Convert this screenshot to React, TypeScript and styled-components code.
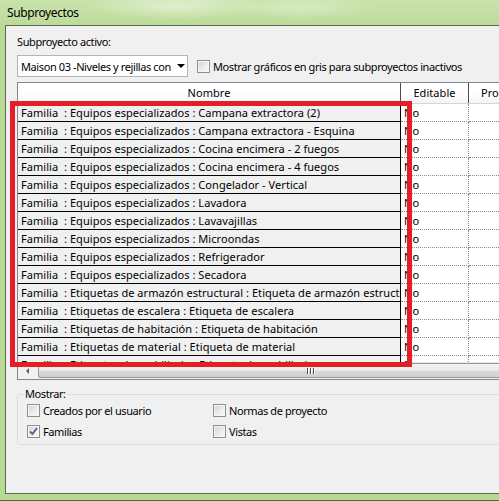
import React from 'react'
import styled, { createGlobalStyle } from 'styled-components'

const GlobalStyle = createGlobalStyle`
  html, body {
    margin: 0;
    padding: 0;
    background: #f0f0f0;
  }
  body {
    font-family: "Noto Sans", "Open Sans", sans-serif;
    font-size: 11px;
    letter-spacing: -0.4px;
    color: #000;
  }
`

const Window = styled.div`
  width: 499px;
  height: 501px;
  overflow: hidden;
  box-sizing: border-box;
  display: flex;
  flex-direction: column;
  background: #b8d993;
  border-bottom: 1px solid #56673f;
`

const TitleBar = styled.div`
  height: 25px;
  flex: none;
  display: flex;
  align-items: center;
  padding-left: 7px;
  font-size: 12px;
  background:
    radial-gradient(ellipse 90px 14px at 175px 6px, rgba(255, 255, 255, 0.45), transparent),
    radial-gradient(ellipse 80px 12px at 300px 8px, rgba(255, 255, 255, 0.3), transparent),
    linear-gradient(180deg, #c9e3ab 0%, #bddb9b 100%);
`

const Client = styled.div`
  flex: 1;
  min-height: 0;
  margin-left: 5px;
  margin-bottom: 6px;
  border: 1px solid #5a6a4c;
  border-right: none;
  background: #f0f0f0;
  padding: 9px 0 0 11px;
  display: flex;
  flex-direction: column;
`

const Label = styled.div`
  line-height: 14px;
`

const TopRow = styled.div`
  margin-top: 6px;
  display: flex;
  align-items: center;
  gap: 9px;
`

const Combo = styled.div`
  width: 171px;
  height: 22px;
  box-sizing: border-box;
  border: 1px solid #b4b4b4;
  background: #fff;
  display: flex;
  align-items: center;
  padding-left: 3px;
  padding-right: 2px;
  white-space: nowrap;
  overflow: hidden;
`

const ComboText = styled.span`
  flex: 1;
  overflow: hidden;
`

const ComboArrow = styled.span`
  width: 0;
  height: 0;
  border-left: 4px solid transparent;
  border-right: 4px solid transparent;
  border-top: 4px solid #000;
  margin-left: 4px;
`

const CheckLabel = styled.label`
  display: flex;
  align-items: center;
  gap: 3px;
  white-space: nowrap;
  line-height: 17px;
`

const Box = styled.span`
  width: 13px;
  height: 13px;
  flex: none;
  box-sizing: border-box;
  border: 1px solid #8e8f8f;
  background: linear-gradient(135deg, #d2d4d8 0%, #f5f5f5 80%);
  box-shadow: inset 0 0 0 1px #f6f6f6;
  display: flex;
  align-items: center;
  justify-content: center;
`

const Grid = styled.div`
  margin-top: 5px;
  width: 600px;
  flex: none;
  position: relative;
  border: 1px solid #828790;
  border-right: none;
  background: #fff;
  letter-spacing: 0.05px;
`

const Viewport = styled.div`
  height: 279px;
  overflow: hidden;
`

const HeaderRow = styled.div`
  display: flex;
  height: 21px;
  box-sizing: border-box;
  border-bottom: 1px solid #d5d5d5;
  background: linear-gradient(180deg, #ffffff 0%, #ffffff 50%, #f3f4f6 100%);
`

const HeaderCell = styled.div<{ $w: number; $inset?: number }>`
  width: ${p => p.$w}px;
  flex: none;
  box-sizing: border-box;
  border-right: 1px solid #4d4d4d;
  display: flex;
  align-items: center;
  justify-content: ${p => (p.$inset === undefined ? 'center' : 'flex-start')};
  padding-left: ${p => p.$inset ?? 0}px;
  line-height: 20px;
  white-space: nowrap;
  overflow: hidden;
`

const Row = styled.div`
  display: flex;
  height: 18px;
`

const NameCell = styled.div`
  width: 383px;
  flex: none;
  box-sizing: border-box;
  border-right: 1px solid #000;
  border-bottom: 1px solid #000;
  background: #f0f0f0;
  padding-left: 3px;
  line-height: 17px;
  white-space: pre;
  overflow: hidden;
`

const ValueCell = styled.div<{ $w: number }>`
  width: ${p => p.$w}px;
  flex: none;
  box-sizing: border-box;
  border-right: 1px dotted #8a8a8a;
  border-bottom: 1px dotted #8a8a8a;
  padding-left: 3px;
  line-height: 17px;
`

const HScroll = styled.div`
  height: 17px;
  display: flex;
  align-items: center;
  background: linear-gradient(180deg, #e4e4e4 0%, #f1f1f1 40%, #f1f1f1 100%);
`

const ScrollArrow = styled.div`
  width: 19px;
  height: 17px;
  flex: none;
  display: flex;
  align-items: center;
  justify-content: center;
`

const ArrowGlyph = styled.span`
  width: 0;
  height: 0;
  border-top: 3px solid transparent;
  border-bottom: 3px solid transparent;
  border-right: 3px solid #606060;
`

const Thumb = styled.div`
  width: 546px;
  height: 15px;
  margin-left: 1px;
  flex: none;
  box-sizing: border-box;
  border: 1px solid #989898;
  border-radius: 2px;
  background: linear-gradient(180deg, #f3f3f3 0%, #e9e9e9 50%, #d9d9d9 51%, #d0d0d0 100%);
  display: flex;
  align-items: center;
  justify-content: center;
  gap: 1px;
`

const Grip = styled.span`
  width: 1px;
  height: 6px;
  background: #4f4f4f;
  box-shadow: 1px 0 0 #fff;
  margin-right: 1px;
`

const Highlight = styled.div`
  position: absolute;
  left: -8px;
  top: 18px;
  width: 402px;
  height: 266px;
  box-sizing: border-box;
  border: 5px solid #e41d27;
  pointer-events: none;
`

const Group = styled.fieldset`
  margin: 7px 0 0 0;
  width: 600px;
  box-sizing: border-box;
  border: 1px solid #d5dfe5;
  border-radius: 3px;
  padding: 1px 0 4px 9px;
`

const Legend = styled.legend`
  padding: 0 1px;
  margin-left: -3px;
  line-height: 14px;
`

const Options = styled.div`
  display: grid;
  grid-template-columns: 186px 200px;
  row-gap: 4px;
`

const rows = [
  'Familia  : Equipos especializados : Campana extractora (2)',
  'Familia  : Equipos especializados : Campana extractora - Esquina',
  'Familia  : Equipos especializados : Cocina encimera - 2 fuegos',
  'Familia  : Equipos especializados : Cocina encimera - 4 fuegos',
  'Familia  : Equipos especializados : Congelador - Vertical',
  'Familia  : Equipos especializados : Lavadora',
  'Familia  : Equipos especializados : Lavavajillas',
  'Familia  : Equipos especializados : Microondas',
  'Familia  : Equipos especializados : Refrigerador',
  'Familia  : Equipos especializados : Secadora',
  'Familia  : Etiquetas de armazón estructural : Etiqueta de armazón estructural',
  'Familia  : Etiquetas de escalera : Etiqueta de escalera',
  'Familia  : Etiquetas de habitación : Etiqueta de habitación',
  'Familia  : Etiquetas de material : Etiqueta de material',
  'Familia  : Etiquetas de mobiliario : Etiqueta de mobiliario',
]

const Checkbox: React.FC<{ checked?: boolean; label: string }> = ({ checked, label }) => (
  <CheckLabel>
    <Box>
      {checked && (
        <svg width="9" height="9" viewBox="0 0 9 9">
          <path d="M1 4.5 L3.5 7 L8 1" fill="none" stroke="#4a5f94" strokeWidth="1.8" />
        </svg>
      )}
    </Box>
    {label}
  </CheckLabel>
)

const App: React.FC = () => {
  return (
    <Window>
      <GlobalStyle />
      <TitleBar>Subproyectos</TitleBar>
      <Client>
        <Label>Subproyecto activo:</Label>
        <TopRow>
          <Combo>
            <ComboText>Maison 03 -Niveles y rejillas con</ComboText>
            <ComboArrow />
          </Combo>
          <Checkbox label="Mostrar gráficos en gris para subproyectos inactivos" />
        </TopRow>
        <Grid>
          <Viewport>
            <HeaderRow>
              <HeaderCell $w={383}>Nombre</HeaderCell>
              <HeaderCell $w={68}>Editable</HeaderCell>
              <HeaderCell $w={80} $inset={12}>Propietario</HeaderCell>
            </HeaderRow>
            {rows.map(name => (
              <Row key={name}>
                <NameCell>{name}</NameCell>
                <ValueCell $w={68}>No</ValueCell>
                <ValueCell $w={80} />
              </Row>
            ))}
          </Viewport>
          <HScroll>
            <ScrollArrow><ArrowGlyph /></ScrollArrow>
            <Thumb><Grip /><Grip /><Grip /></Thumb>
          </HScroll>
          <Highlight />
        </Grid>
        <Group>
          <Legend>Mostrar:</Legend>
          <Options>
            <Checkbox label="Creados por el usuario" />
            <Checkbox label="Normas de proyecto" />
            <Checkbox checked label="Familias" />
            <Checkbox label="Vistas" />
          </Options>
        </Group>
      </Client>
    </Window>
  )
}

export default App
